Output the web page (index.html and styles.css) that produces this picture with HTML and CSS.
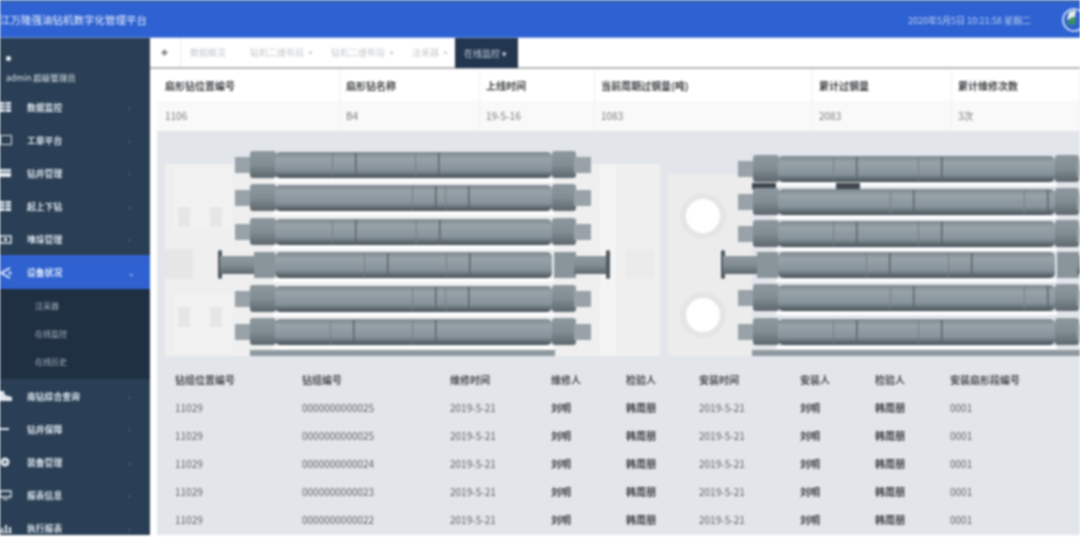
FILE: index.html
```html
<!DOCTYPE html>
<html lang="zh-CN">
<head>
  <meta charset="UTF-8">
  <meta name="viewport" content="width=device-width, initial-scale=1.0">
  <title>数字化管理平台</title>
  <link rel="stylesheet" href="styles.css">
</head>
<body>
  <div class="app">
    <!-- 顶栏 -->
    <header class="topbar">
      <div class="title">江万隆强油钻机数字化管理平台</div>
      <div class="clock">2020年5月5日 10:21:58 星期二</div>
      <svg class="avatar" viewBox="0 0 24 24">
        <circle cx="12" cy="12" r="11" fill="#2f62d0" stroke="#dfe9f7" stroke-width="1.5"/>
        <path d="M5 12 L7 4 L14 2 L13 9 Z" fill="#e9f1e6"/>
        <path d="M4 16 L10 9 L14 10 L13 17 Z" fill="#3d8f5b"/>
      </svg>
    </header>

    <div class="layout">
      <!-- 左侧菜单 -->
      <aside class="sidebar">
        <div class="user">
          <span class="user-dot"></span>
          <span class="user-name">admin 超级管理员</span>
        </div>
        <a class="nav-item"><svg class="nav-icon" viewBox="0 0 12 12"><path d="M0 1h11v10H0z" fill="#dfe6ee"/><path d="M0 4h11M0 7.500h11M5 1v10" stroke="#2a3f55"/></svg>数据监控<i class="chev">›</i></a>
        <a class="nav-item"><svg class="nav-icon" viewBox="0 0 12 12"><path d="M.5 1.500h11v9H.5z" fill="none" stroke="#dfe6ee"/></svg>工单平台<i class="chev">›</i></a>
        <a class="nav-item"><svg class="nav-icon" viewBox="0 0 12 12"><path d="M0 2h11v8H0z" fill="#dfe6ee"/><path d="M0 5h11" stroke="#2a3f55"/></svg>钻井管理<i class="chev">›</i></a>
        <a class="nav-item"><svg class="nav-icon" viewBox="0 0 12 12"><path d="M0 1h11v10H0z" fill="#dfe6ee"/><path d="M0 4h11M0 7.500h11M5 1v10" stroke="#2a3f55"/></svg>起上下钻<i class="chev">›</i></a>
        <a class="nav-item"><svg class="nav-icon" viewBox="0 0 12 12"><path d="M0 3h11v7H0z" fill="none" stroke="#dfe6ee" stroke-width="1.500"/><path d="M4 5h3v3H4z" fill="#dfe6ee"/></svg>堆垛管理<i class="chev">›</i></a>
        <a class="nav-item active"><svg class="nav-icon" viewBox="0 0 12 12"><path d="M1 6 L10 1 M1 6 L10 11" stroke="#e6eefa" stroke-width="2"/><circle cx="10" cy="6" r="1.500" fill="#e6eefa"/></svg>设备状况<i class="chev">⌄</i></a>
        <div class="subnav">
          <a class="sub-item">注采器</a>
          <a class="sub-item">在线监控</a>
          <a class="sub-item">在线历史</a>
        </div>
        <a class="nav-item"><svg class="nav-icon" viewBox="0 0 12 12"><path d="M0 1h4l1 4 7 2v4H0z" fill="#dfe6ee"/></svg>南钻综合查询<i class="chev">›</i></a>
        <a class="nav-item"><svg class="nav-icon" viewBox="0 0 12 12"><path d="M0 5h9v2H0z" fill="#dfe6ee"/></svg>钻井保障<i class="chev">›</i></a>
        <a class="nav-item"><svg class="nav-icon" viewBox="0 0 12 12"><circle cx="5" cy="6" r="4.500" fill="#dfe6ee"/><circle cx="5" cy="6" r="1.500" fill="#2a3f55"/></svg>装备管理<i class="chev">›</i></a>
        <a class="nav-item"><svg class="nav-icon" viewBox="0 0 12 12"><path d="M0 2h11v6H0z" fill="none" stroke="#dfe6ee" stroke-width="1.300"/><path d="M3 10.500h5" stroke="#dfe6ee"/></svg>报表信息<i class="chev">›</i></a>
        <a class="nav-item"><svg class="nav-icon" viewBox="0 0 12 12"><path d="M0 10h12v1H0zM1 6h2v4H1zM5 3h2v7H5zM9 5h2v5H9z" fill="#dfe6ee"/></svg>执行报表<i class="chev">›</i></a>
      </aside>

      <main class="content">
        <!-- 标签页 -->
        <nav class="tabs">
          <span class="tab-home">◆</span>
          <span class="tab tab-first">数据概览</span>
          <span class="tab">钻机二维布局 ▪</span>
          <span class="tab">钻机二维布局 ▪</span>
          <span class="tab">注采器 ▪</span>
          <span class="tab tab-active">在线监控 ▾</span>
        </nav>

        <!-- 钻机信息 -->
        <section class="info">
          <div class="info-row info-head">
            <div>扇形钻位置编号</div><div>扇形钻名称</div><div>上线时间</div><div>当前周期过钢量(吨)</div><div>累计过钢量</div><div>累计维修次数</div>
          </div>
          <div class="info-row info-body">
            <div>1106</div><div>B4</div><div>19-5-16</div><div>1083</div><div>2083</div><div>3次</div>
          </div>
        </section>

        <section class="panel">
          <!-- 钻机示意图 -->
          <svg class="rig" viewBox="157 132 923 225" width="923" height="225">
            <defs>
              <linearGradient id="barrel" x1="0" y1="0" x2="0" y2="1">
                <stop offset="0" stop-color="#7d888f"/>
                <stop offset=".25" stop-color="#97a3a9"/>
                <stop offset=".7" stop-color="#87939a"/>
                <stop offset=".92" stop-color="#566168"/>
                <stop offset="1" stop-color="#454e54"/>
              </linearGradient>
              <linearGradient id="flange" x1="0" y1="0" x2="0" y2="1">
                <stop offset="0" stop-color="#8d989e"/>
                <stop offset=".5" stop-color="#828d94"/>
                <stop offset="1" stop-color="#5d676d"/>
              </linearGradient>
              <g id="rod">
                <rect x="-2" y="14" width="281" height="3" fill="#fff"/>
                <rect x="-40" y="-8" width="17" height="16" fill="#98a2a8"/>
                <rect x="-25" y="-14" width="26" height="27" rx="3" fill="url(#flange)"/>
                <rect x="0" y="-13" width="277" height="26" rx="5" fill="url(#barrel)"/>
                <rect x="277" y="-14" width="24" height="27" rx="3" fill="url(#flange)"/>
                <rect x="299" y="-8" width="17" height="16" fill="#98a2a8"/>
              </g>
              <g id="rod-long">
                <rect x="-2" y="14" width="281" height="3" fill="#fff"/>
                <rect x="-57" y="-15" width="4" height="29" rx="2" fill="#4f595f"/>
                <rect x="-55" y="-9" width="38" height="18" fill="url(#flange)"/>
                <rect x="-21" y="-13" width="21" height="26" fill="#8a959b"/>
                <rect x="0" y="-13" width="277" height="26" rx="5" fill="url(#barrel)"/>
                <rect x="279" y="-13" width="22" height="26" fill="#8a959b"/>
                <rect x="299" y="-9" width="34" height="18" fill="url(#flange)"/>
                <rect x="331" y="-15" width="4" height="29" rx="2" fill="#4f595f"/>
              </g>
              <g id="seg">
                <rect x="0" y="-13" width="24" height="26" fill="url(#barrel)"/>
                <rect x="0" y="-12" width="1" height="24" fill="#737e84"/>
                <rect x="23" y="-12" width="1.500" height="24" fill="#5a646a"/>
              </g>
            </defs>

            <!-- 底座 -->
            <rect x="165" y="165" width="495" height="192" fill="#efefef"/>
            <rect x="668" y="175" width="84" height="182" fill="#ececec"/>
            <rect x="600" y="165" width="16" height="192" fill="#f4f4f4"/>
            <rect x="174" y="170" width="58" height="60" fill="#f2f2f2"/>
            <rect x="174" y="295" width="58" height="60" fill="#f2f2f2"/>
            <rect x="178" y="208" width="12" height="20" fill="#e6e6e6"/>
            <rect x="210" y="208" width="12" height="20" fill="#e6e6e6"/>
            <rect x="178" y="308" width="12" height="20" fill="#e6e6e6"/>
            <rect x="210" y="308" width="12" height="20" fill="#e6e6e6"/>
            <rect x="165" y="250" width="28" height="30" fill="#e6e6e6"/>
            <rect x="625" y="250" width="30" height="30" fill="#ebebeb"/>
            <circle cx="703" cy="217" r="23" fill="#e5e5e5"/>
            <circle cx="703" cy="316" r="23" fill="#e5e5e5"/>
            <circle cx="703" cy="217" r="17" fill="#fff"/>
            <circle cx="703" cy="316" r="17" fill="#fff"/>

            <!-- 左侧油缸 -->
            <use href="#rod" x="275" y="166"/>
            <use href="#seg" x="332" y="166"/><use href="#seg" x="415" y="166"/>
            <use href="#rod" x="275" y="199"/>
            <use href="#seg" x="412" y="199"/><use href="#seg" x="445" y="199"/>
            <use href="#rod" x="275" y="233"/>
            <use href="#seg" x="332" y="233"/><use href="#seg" x="416" y="233"/>
            <use href="#rod-long" x="275" y="266"/>
            <use href="#seg" x="364" y="266"/><use href="#seg" x="446" y="266"/>
            <use href="#rod" x="275" y="300"/>
            <use href="#seg" x="412" y="300"/><use href="#seg" x="445" y="300"/>
            <use href="#rod" x="275" y="333"/>
            <use href="#seg" x="330" y="333"/><use href="#seg" x="412" y="333"/>
            <rect x="250" y="351" width="305" height="6" fill="#8f9aa0"/>

            <!-- 右侧油缸 -->
            <use href="#rod" x="778" y="170"/>
            <use href="#seg" x="833" y="170"/><use href="#seg" x="918" y="170"/>
            <rect x="752" y="184" width="24" height="6" fill="#3f484e"/>
            <rect x="836" y="184" width="24" height="6" fill="#3f484e"/>
            <use href="#rod" x="778" y="203"/>
            <use href="#seg" x="890" y="203"/><use href="#seg" x="1024" y="203"/>
            <use href="#rod" x="778" y="235"/>
            <use href="#seg" x="833" y="235"/><use href="#seg" x="918" y="235"/>
            <use href="#rod-long" x="778" y="266"/>
            <use href="#seg" x="866" y="266"/><use href="#seg" x="948" y="266"/>
            <use href="#rod" x="778" y="299"/>
            <use href="#seg" x="890" y="299"/><use href="#seg" x="1024" y="299"/>
            <use href="#rod" x="778" y="333"/>
            <use href="#seg" x="833" y="333"/><use href="#seg" x="918" y="333"/>
            <rect x="752" y="351" width="328" height="6" fill="#8f9aa0"/>
          </svg>

          <!-- 钻杆记录 -->
          <div class="records">
            <div class="rec-row rec-head">
              <div>钻组位置编号</div><div>钻组编号</div><div>维修时间</div><div>维修人</div><div>检验人</div><div>安装时间</div><div>安装人</div><div>检验人</div><div>安装扇形段编号</div>
            </div>
            <div class="rec-row">
              <div>11029</div><div>0000000000025</div><div>2019-5-21</div><div class="strong">刘明</div><div class="strong">韩周朋</div><div>2019-5-21</div><div class="strong">刘明</div><div class="strong">韩周朋</div><div>0001</div>
            </div>
            <div class="rec-row">
              <div>11029</div><div>0000000000025</div><div>2019-5-21</div><div class="strong">刘明</div><div class="strong">韩周朋</div><div>2019-5-21</div><div class="strong">刘明</div><div class="strong">韩周朋</div><div>0001</div>
            </div>
            <div class="rec-row">
              <div>11029</div><div>0000000000024</div><div>2019-5-21</div><div class="strong">刘明</div><div class="strong">韩周朋</div><div>2019-5-21</div><div class="strong">刘明</div><div class="strong">韩周朋</div><div>0001</div>
            </div>
            <div class="rec-row">
              <div>11029</div><div>0000000000023</div><div>2019-5-21</div><div class="strong">刘明</div><div class="strong">韩周朋</div><div>2019-5-21</div><div class="strong">刘明</div><div class="strong">韩周朋</div><div>0001</div>
            </div>
            <div class="rec-row">
              <div>11029</div><div>0000000000022</div><div>2019-5-21</div><div class="strong">刘明</div><div class="strong">韩周朋</div><div>2019-5-21</div><div class="strong">刘明</div><div class="strong">韩周朋</div><div>0001</div>
            </div>
          </div>
        </section>
      </main>
    </div>
  </div>
</body>
</html>
```

FILE: styles.css
```css
* {
  margin: 0;
  padding: 0;
  box-sizing: border-box;
}

html, body {
  width: 1080px;
  height: 540px;
  overflow: hidden;
  background-color: #fff;
}

body {
  font-family: "Noto Sans CJK SC", "Liberation Sans", sans-serif;
}

/* the reference is a soft, upscaled capture */
.app {
  height: 535px;
  display: flex;
  flex-direction: column;
  filter: blur(0.9px);
}

.topbar {
  height: 38px;
  flex: none;
  display: flex;
  align-items: center;
  background-color: #2e62d2;
  border-top: 3px solid #3566b8;
  border-bottom: 1px solid #6f95dc;
  color: #e8effb;
  overflow: hidden;
}

.title {
  font-size: 10.5px;
  width: 908px;
  flex: none;
  margin-top: -1px;
  white-space: nowrap;
}

.clock {
  font-size: 9px;
  width: 154px;
  flex: none;
  color: #bcd0f2;
  white-space: nowrap;
}

.avatar {
  width: 24px;
  height: 24px;
  flex: none;
}

.layout {
  flex: 1;
  display: flex;
  min-height: 0;
}

.sidebar {
  width: 150px;
  flex: none;
  background-color: #2a3f55;
  color: #dfe6ee;
  overflow: hidden;
}

.user {
  height: 52px;
  padding: 18px 0 0 6px;
  display: flex;
  flex-direction: column;
  gap: 11px;
}

.user-dot {
  width: 5px;
  height: 5px;
  border-radius: 50%;
  background-color: #e6ebf1;
}

.user-name {
  font-size: 8.5px;
  line-height: 10px;
  white-space: nowrap;
}

.nav-item {
  height: 33px;
  padding-top: 1px;
  display: flex;
  align-items: center;
  font-size: 8.8px;
  font-weight: 700;
  position: relative;
  white-space: nowrap;
}

.nav-item.active {
  height: 34px;
  background-color: #2f62d0;
  color: #e6eefa;
}

.nav-icon {
  width: 12px;
  height: 12px;
  margin-right: 15px;
  flex: none;
}

.chev {
  position: absolute;
  left: 128px;
  font-style: normal;
  font-size: 8px;
  font-weight: 400;
  color: #72859a;
}

.active .chev {
  color: #cfdcf5;
}

.subnav {
  height: 90px;
  background-color: #1f3042;
  padding-top: 2px;
}

.sub-item {
  display: flex;
  align-items: center;
  height: 28px;
  padding-left: 35px;
  font-size: 8px;
  color: #a9b5c2;
}

.content {
  flex: 1;
  min-width: 0;
  display: flex;
  flex-direction: column;
  padding-left: 7px;
  background-color: #fff;
}

.tabs {
  height: 31px;
  margin-left: -7px;
  display: flex;
  align-items: stretch;
  flex: none;
  font-size: 9px;
  color: #c4c7cb;
  border-bottom: 2px solid #b4b7ba;
  white-space: nowrap;
}

.tab-home {
  width: 31px;
  padding-left: 11px;
  line-height: 29px;
  color: #8b8f94;
  font-size: 7px;
  border-right: 1px solid #eee;
}

.tab {
  display: flex;
  align-items: center;
  margin-left: 9px;
  margin-right: 7px;
}

.tab-first {
  margin-right: 15px;
}

.tab-active {
  background-color: #22364f;
  color: #c9d3df;
  margin: 0 0 -1px -2px;
  padding: 0 9px;
  width: 63px;
}

.info {
  flex: none;
  margin-top: 1px;
  font-size: 10px;
}

.info-row {
  display: grid;
  grid-template-columns: 183px 140px 115px 218px 139px 1fr;
}

.info-row > div {
  padding-left: 6px;
  border-right: 1px solid #f0f0f0;
  white-space: nowrap;
}

.info-row > div:first-child {
  padding-left: 8px;
}

.info-head {
  height: 31px;
  line-height: 31px;
  color: #3f4144;
  font-weight: 700;
}

.info-body {
  height: 30px;
  line-height: 30px;
  background-color: #f9f9f9;
  color: #77797c;
  font-size: 10px;
}

.panel {
  flex: 1;
  min-height: 0;
  background-color: #e2e5ea;
  overflow: hidden;
}

.rig {
  display: block;
}

.records {
  padding: 10px 0 0 18px;
  font-size: 10px;
  color: #5f6165;
}

.rec-row {
  height: 28px;
  line-height: 28px;
  display: grid;
  grid-template-columns: 127px 148px 101px 75px 73px 101px 75px 75px 1fr;
  white-space: nowrap;
}

.rec-head {
  color: #4a4c50;
  font-weight: 700;
}

.strong {
  color: #3c3e42;
  font-weight: 700;
}
```
